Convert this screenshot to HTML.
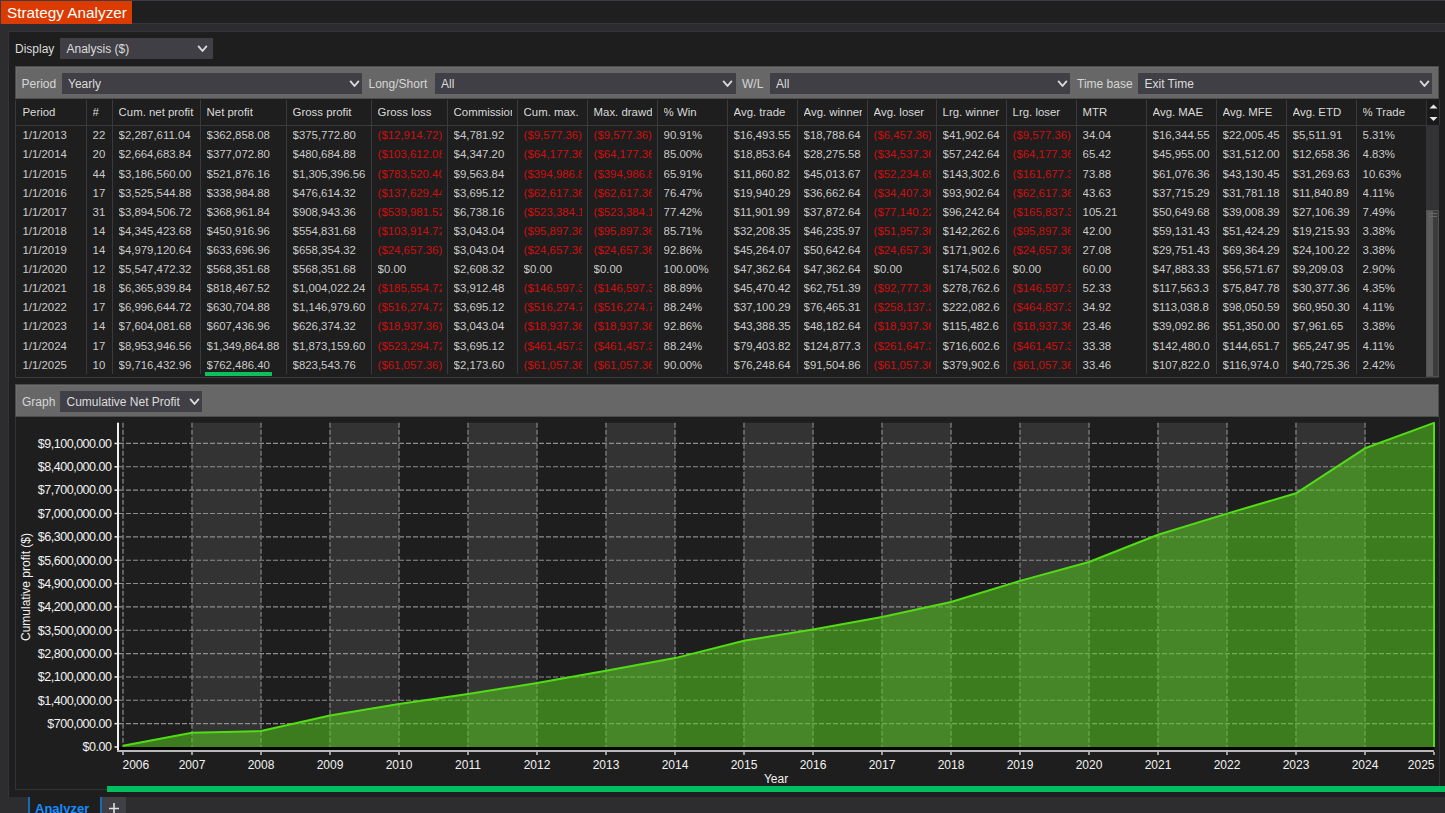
<!DOCTYPE html>
<html><head><meta charset="utf-8">
<style>
*{margin:0;padding:0;box-sizing:border-box}
html,body{width:1445px;height:813px;overflow:hidden;background:#2d2d30;font-family:"Liberation Sans", sans-serif;}
.a{position:absolute}
.t{position:absolute;white-space:nowrap;line-height:1;}
.cell{position:absolute;white-space:nowrap;overflow:hidden;line-height:1;font-size:11.4px;color:#cacaca}
.hd{color:#dadada}
.red{color:#cf0e0e}
.combo{position:absolute;background:#403f45}
.chev{position:absolute}
</style></head><body>

<div class="a" style="left:0;top:0;width:1445px;height:1px;background:#3c3c42"></div>
<div class="a" style="left:0;top:1px;width:1445px;height:22px;background:#1f1f1f"></div>
<div class="a" style="left:0;top:1px;width:1px;height:22px;background:#3c3c42"></div>
<div class="a" style="left:0;top:23px;width:1445px;height:9px;background:#2d2d30;border-top:1px solid #37373b"></div>
<div class="a" style="left:1px;top:1px;width:131px;height:23px;background:#db3a00"></div>
<div class="t" style="left:7px;top:5.38px;font-size:15.3px;color:#fff">Strategy Analyzer</div>
<div class="a" style="left:8px;top:31px;width:1437px;height:766px;background:#1e1e1e;border-top:1px solid #343438;border-left:1px solid #343438"></div>
<div class="t" style="left:15px;top:42.64px;font-size:12px;color:#dcdcdc">Display</div>
<div class="combo" style="left:60px;top:38px;width:153px;height:21px"></div>
<div class="t" style="left:66.5px;top:42.64px;font-size:12px;color:#dcdcdc">Analysis ($)</div>
<svg class="a" style="left:196.7px;top:44.5px" width="11" height="8" viewBox="0 0 11 8"><path d="M1.6 1.4 L5.5 6 L9.4 1.4" fill="none" stroke="#dadada" stroke-width="1.9" stroke-linecap="round" stroke-linejoin="round"/></svg>
<div class="a" style="left:15px;top:66px;width:1424px;height:33px;background:#676767;border:1px solid #4c4c4c;box-shadow:inset 1px 1px 0 #6e6e6e"></div>
<div class="t" style="left:21.5px;top:78.14px;font-size:12px;color:#d6d6d6">Period</div>
<div class="combo" style="left:62px;top:73px;width:300px;height:21px"></div>
<div class="t" style="left:68px;top:78.14px;font-size:12px;color:#dcdcdc">Yearly</div>
<svg class="a" style="left:348.5px;top:79.5px" width="11" height="8" viewBox="0 0 11 8"><path d="M1.6 1.4 L5.5 6 L9.4 1.4" fill="none" stroke="#dadada" stroke-width="1.9" stroke-linecap="round" stroke-linejoin="round"/></svg>
<div class="t" style="left:368.5px;top:78.14px;font-size:12px;color:#d6d6d6">Long/Short</div>
<div class="combo" style="left:435px;top:73px;width:300.5px;height:21px"></div>
<div class="t" style="left:441px;top:78.14px;font-size:12px;color:#dcdcdc">All</div>
<svg class="a" style="left:722.0px;top:79.5px" width="11" height="8" viewBox="0 0 11 8"><path d="M1.6 1.4 L5.5 6 L9.4 1.4" fill="none" stroke="#dadada" stroke-width="1.9" stroke-linecap="round" stroke-linejoin="round"/></svg>
<div class="t" style="left:742px;top:78.14px;font-size:12px;color:#d6d6d6">W/L</div>
<div class="combo" style="left:770px;top:73px;width:300px;height:21px"></div>
<div class="t" style="left:776px;top:78.14px;font-size:12px;color:#dcdcdc">All</div>
<svg class="a" style="left:1056.5px;top:79.5px" width="11" height="8" viewBox="0 0 11 8"><path d="M1.6 1.4 L5.5 6 L9.4 1.4" fill="none" stroke="#dadada" stroke-width="1.9" stroke-linecap="round" stroke-linejoin="round"/></svg>
<div class="t" style="left:1077px;top:78.14px;font-size:12px;color:#d6d6d6">Time base</div>
<div class="combo" style="left:1138px;top:73px;width:294px;height:21px"></div>
<div class="t" style="left:1144.5px;top:78.14px;font-size:12px;color:#dcdcdc">Exit Time</div>
<svg class="a" style="left:1418.5px;top:79.5px" width="11" height="8" viewBox="0 0 11 8"><path d="M1.6 1.4 L5.5 6 L9.4 1.4" fill="none" stroke="#dadada" stroke-width="1.9" stroke-linecap="round" stroke-linejoin="round"/></svg>
<div class="a" style="left:15px;top:99.5px;width:1411px;height:278px;background:#1e1e1e"></div>
<div class="a" style="left:15px;top:125px;width:1411px;height:1px;background:#3a3a3e"></div>
<div class="a" style="left:15px;top:377px;width:1424px;height:1px;background:#3a3a3e"></div>
<div class="a" style="left:86px;top:100px;width:1px;height:274px;background:#3a3a3e"></div>
<div class="a" style="left:112px;top:100px;width:1px;height:274px;background:#3a3a3e"></div>
<div class="a" style="left:200px;top:100px;width:1px;height:274px;background:#3a3a3e"></div>
<div class="a" style="left:286px;top:100px;width:1px;height:274px;background:#3a3a3e"></div>
<div class="a" style="left:371px;top:100px;width:1px;height:274px;background:#3a3a3e"></div>
<div class="a" style="left:447px;top:100px;width:1px;height:274px;background:#3a3a3e"></div>
<div class="a" style="left:517px;top:100px;width:1px;height:274px;background:#3a3a3e"></div>
<div class="a" style="left:587px;top:100px;width:1px;height:274px;background:#3a3a3e"></div>
<div class="a" style="left:657px;top:100px;width:1px;height:274px;background:#3a3a3e"></div>
<div class="a" style="left:727px;top:100px;width:1px;height:274px;background:#3a3a3e"></div>
<div class="a" style="left:797px;top:100px;width:1px;height:274px;background:#3a3a3e"></div>
<div class="a" style="left:867px;top:100px;width:1px;height:274px;background:#3a3a3e"></div>
<div class="a" style="left:936px;top:100px;width:1px;height:274px;background:#3a3a3e"></div>
<div class="a" style="left:1006px;top:100px;width:1px;height:274px;background:#3a3a3e"></div>
<div class="a" style="left:1076px;top:100px;width:1px;height:274px;background:#3a3a3e"></div>
<div class="a" style="left:1146px;top:100px;width:1px;height:274px;background:#3a3a3e"></div>
<div class="a" style="left:1216px;top:100px;width:1px;height:274px;background:#3a3a3e"></div>
<div class="a" style="left:1286px;top:100px;width:1px;height:274px;background:#3a3a3e"></div>
<div class="a" style="left:1356px;top:100px;width:1px;height:274px;background:#3a3a3e"></div>
<div class="a" style="left:15px;top:100px;width:1px;height:277px;background:#3a3a3e"></div>
<div class="cell hd" style="left:22.5px;top:106.85px;width:58.5px;height:14px">Period</div>
<div class="cell" style="left:22.5px;top:130.35px;width:58.5px;height:14px">1/1/2013</div>
<div class="cell" style="left:22.5px;top:149.46px;width:58.5px;height:14px">1/1/2014</div>
<div class="cell" style="left:22.5px;top:168.57px;width:58.5px;height:14px">1/1/2015</div>
<div class="cell" style="left:22.5px;top:187.68px;width:58.5px;height:14px">1/1/2016</div>
<div class="cell" style="left:22.5px;top:206.79px;width:58.5px;height:14px">1/1/2017</div>
<div class="cell" style="left:22.5px;top:225.90px;width:58.5px;height:14px">1/1/2018</div>
<div class="cell" style="left:22.5px;top:245.01px;width:58.5px;height:14px">1/1/2019</div>
<div class="cell" style="left:22.5px;top:264.12px;width:58.5px;height:14px">1/1/2020</div>
<div class="cell" style="left:22.5px;top:283.23px;width:58.5px;height:14px">1/1/2021</div>
<div class="cell" style="left:22.5px;top:302.34px;width:58.5px;height:14px">1/1/2022</div>
<div class="cell" style="left:22.5px;top:321.45px;width:58.5px;height:14px">1/1/2023</div>
<div class="cell" style="left:22.5px;top:340.56px;width:58.5px;height:14px">1/1/2024</div>
<div class="cell" style="left:22.5px;top:359.67px;width:58.5px;height:14px">1/1/2025</div>
<div class="cell hd" style="left:92.6px;top:106.85px;width:14.4px;height:14px">#</div>
<div class="cell" style="left:92.6px;top:130.35px;width:14.4px;height:14px">22</div>
<div class="cell" style="left:92.6px;top:149.46px;width:14.4px;height:14px">20</div>
<div class="cell" style="left:92.6px;top:168.57px;width:14.4px;height:14px">44</div>
<div class="cell" style="left:92.6px;top:187.68px;width:14.4px;height:14px">17</div>
<div class="cell" style="left:92.6px;top:206.79px;width:14.4px;height:14px">31</div>
<div class="cell" style="left:92.6px;top:225.90px;width:14.4px;height:14px">14</div>
<div class="cell" style="left:92.6px;top:245.01px;width:14.4px;height:14px">14</div>
<div class="cell" style="left:92.6px;top:264.12px;width:14.4px;height:14px">12</div>
<div class="cell" style="left:92.6px;top:283.23px;width:14.4px;height:14px">18</div>
<div class="cell" style="left:92.6px;top:302.34px;width:14.4px;height:14px">17</div>
<div class="cell" style="left:92.6px;top:321.45px;width:14.4px;height:14px">14</div>
<div class="cell" style="left:92.6px;top:340.56px;width:14.4px;height:14px">17</div>
<div class="cell" style="left:92.6px;top:359.67px;width:14.4px;height:14px">10</div>
<div class="cell hd" style="left:118.6px;top:106.85px;width:76.4px;height:14px">Cum. net profit</div>
<div class="cell" style="left:118.6px;top:130.35px;width:76.4px;height:14px">$2,287,611.04</div>
<div class="cell" style="left:118.6px;top:149.46px;width:76.4px;height:14px">$2,664,683.84</div>
<div class="cell" style="left:118.6px;top:168.57px;width:76.4px;height:14px">$3,186,560.00</div>
<div class="cell" style="left:118.6px;top:187.68px;width:76.4px;height:14px">$3,525,544.88</div>
<div class="cell" style="left:118.6px;top:206.79px;width:76.4px;height:14px">$3,894,506.72</div>
<div class="cell" style="left:118.6px;top:225.90px;width:76.4px;height:14px">$4,345,423.68</div>
<div class="cell" style="left:118.6px;top:245.01px;width:76.4px;height:14px">$4,979,120.64</div>
<div class="cell" style="left:118.6px;top:264.12px;width:76.4px;height:14px">$5,547,472.32</div>
<div class="cell" style="left:118.6px;top:283.23px;width:76.4px;height:14px">$6,365,939.84</div>
<div class="cell" style="left:118.6px;top:302.34px;width:76.4px;height:14px">$6,996,644.72</div>
<div class="cell" style="left:118.6px;top:321.45px;width:76.4px;height:14px">$7,604,081.68</div>
<div class="cell" style="left:118.6px;top:340.56px;width:76.4px;height:14px">$8,953,946.56</div>
<div class="cell" style="left:118.6px;top:359.67px;width:76.4px;height:14px">$9,716,432.96</div>
<div class="cell hd" style="left:206.6px;top:106.85px;width:74.4px;height:14px">Net profit</div>
<div class="cell" style="left:206.6px;top:130.35px;width:74.4px;height:14px">$362,858.08</div>
<div class="cell" style="left:206.6px;top:149.46px;width:74.4px;height:14px">$377,072.80</div>
<div class="cell" style="left:206.6px;top:168.57px;width:74.4px;height:14px">$521,876.16</div>
<div class="cell" style="left:206.6px;top:187.68px;width:74.4px;height:14px">$338,984.88</div>
<div class="cell" style="left:206.6px;top:206.79px;width:74.4px;height:14px">$368,961.84</div>
<div class="cell" style="left:206.6px;top:225.90px;width:74.4px;height:14px">$450,916.96</div>
<div class="cell" style="left:206.6px;top:245.01px;width:74.4px;height:14px">$633,696.96</div>
<div class="cell" style="left:206.6px;top:264.12px;width:74.4px;height:14px">$568,351.68</div>
<div class="cell" style="left:206.6px;top:283.23px;width:74.4px;height:14px">$818,467.52</div>
<div class="cell" style="left:206.6px;top:302.34px;width:74.4px;height:14px">$630,704.88</div>
<div class="cell" style="left:206.6px;top:321.45px;width:74.4px;height:14px">$607,436.96</div>
<div class="cell" style="left:206.6px;top:340.56px;width:74.4px;height:14px">$1,349,864.88</div>
<div class="cell" style="left:206.6px;top:359.67px;width:74.4px;height:14px">$762,486.40</div>
<div class="cell hd" style="left:292.6px;top:106.85px;width:73.4px;height:14px">Gross profit</div>
<div class="cell" style="left:292.6px;top:130.35px;width:73.4px;height:14px">$375,772.80</div>
<div class="cell" style="left:292.6px;top:149.46px;width:73.4px;height:14px">$480,684.88</div>
<div class="cell" style="left:292.6px;top:168.57px;width:73.4px;height:14px">$1,305,396.56</div>
<div class="cell" style="left:292.6px;top:187.68px;width:73.4px;height:14px">$476,614.32</div>
<div class="cell" style="left:292.6px;top:206.79px;width:73.4px;height:14px">$908,943.36</div>
<div class="cell" style="left:292.6px;top:225.90px;width:73.4px;height:14px">$554,831.68</div>
<div class="cell" style="left:292.6px;top:245.01px;width:73.4px;height:14px">$658,354.32</div>
<div class="cell" style="left:292.6px;top:264.12px;width:73.4px;height:14px">$568,351.68</div>
<div class="cell" style="left:292.6px;top:283.23px;width:73.4px;height:14px">$1,004,022.24</div>
<div class="cell" style="left:292.6px;top:302.34px;width:73.4px;height:14px">$1,146,979.60</div>
<div class="cell" style="left:292.6px;top:321.45px;width:73.4px;height:14px">$626,374.32</div>
<div class="cell" style="left:292.6px;top:340.56px;width:73.4px;height:14px">$1,873,159.60</div>
<div class="cell" style="left:292.6px;top:359.67px;width:73.4px;height:14px">$823,543.76</div>
<div class="cell hd" style="left:377.6px;top:106.85px;width:64.4px;height:14px">Gross loss</div>
<div class="cell red" style="left:377.6px;top:130.35px;width:64.4px;height:14px">($12,914.72)</div>
<div class="cell red" style="left:377.6px;top:149.46px;width:64.4px;height:14px">($103,612.08)</div>
<div class="cell red" style="left:377.6px;top:168.57px;width:64.4px;height:14px">($783,520.40)</div>
<div class="cell red" style="left:377.6px;top:187.68px;width:64.4px;height:14px">($137,629.44)</div>
<div class="cell red" style="left:377.6px;top:206.79px;width:64.4px;height:14px">($539,981.52)</div>
<div class="cell red" style="left:377.6px;top:225.90px;width:64.4px;height:14px">($103,914.72)</div>
<div class="cell red" style="left:377.6px;top:245.01px;width:64.4px;height:14px">($24,657.36)</div>
<div class="cell" style="left:377.6px;top:264.12px;width:64.4px;height:14px">$0.00</div>
<div class="cell red" style="left:377.6px;top:283.23px;width:64.4px;height:14px">($185,554.72)</div>
<div class="cell red" style="left:377.6px;top:302.34px;width:64.4px;height:14px">($516,274.72)</div>
<div class="cell red" style="left:377.6px;top:321.45px;width:64.4px;height:14px">($18,937.36)</div>
<div class="cell red" style="left:377.6px;top:340.56px;width:64.4px;height:14px">($523,294.72)</div>
<div class="cell red" style="left:377.6px;top:359.67px;width:64.4px;height:14px">($61,057.36)</div>
<div class="cell hd" style="left:453.6px;top:106.85px;width:58.4px;height:14px">Commission</div>
<div class="cell" style="left:453.6px;top:130.35px;width:58.4px;height:14px">$4,781.92</div>
<div class="cell" style="left:453.6px;top:149.46px;width:58.4px;height:14px">$4,347.20</div>
<div class="cell" style="left:453.6px;top:168.57px;width:58.4px;height:14px">$9,563.84</div>
<div class="cell" style="left:453.6px;top:187.68px;width:58.4px;height:14px">$3,695.12</div>
<div class="cell" style="left:453.6px;top:206.79px;width:58.4px;height:14px">$6,738.16</div>
<div class="cell" style="left:453.6px;top:225.90px;width:58.4px;height:14px">$3,043.04</div>
<div class="cell" style="left:453.6px;top:245.01px;width:58.4px;height:14px">$3,043.04</div>
<div class="cell" style="left:453.6px;top:264.12px;width:58.4px;height:14px">$2,608.32</div>
<div class="cell" style="left:453.6px;top:283.23px;width:58.4px;height:14px">$3,912.48</div>
<div class="cell" style="left:453.6px;top:302.34px;width:58.4px;height:14px">$3,695.12</div>
<div class="cell" style="left:453.6px;top:321.45px;width:58.4px;height:14px">$3,043.04</div>
<div class="cell" style="left:453.6px;top:340.56px;width:58.4px;height:14px">$3,695.12</div>
<div class="cell" style="left:453.6px;top:359.67px;width:58.4px;height:14px">$2,173.60</div>
<div class="cell hd" style="left:523.6px;top:106.85px;width:58.4px;height:14px">Cum. max. drawdown</div>
<div class="cell red" style="left:523.6px;top:130.35px;width:58.4px;height:14px">($9,577.36)</div>
<div class="cell red" style="left:523.6px;top:149.46px;width:58.4px;height:14px">($64,177.36)</div>
<div class="cell red" style="left:523.6px;top:168.57px;width:58.4px;height:14px">($394,986.88)</div>
<div class="cell red" style="left:523.6px;top:187.68px;width:58.4px;height:14px">($62,617.36)</div>
<div class="cell red" style="left:523.6px;top:206.79px;width:58.4px;height:14px">($523,384.16)</div>
<div class="cell red" style="left:523.6px;top:225.90px;width:58.4px;height:14px">($95,897.36)</div>
<div class="cell red" style="left:523.6px;top:245.01px;width:58.4px;height:14px">($24,657.36)</div>
<div class="cell" style="left:523.6px;top:264.12px;width:58.4px;height:14px">$0.00</div>
<div class="cell red" style="left:523.6px;top:283.23px;width:58.4px;height:14px">($146,597.36)</div>
<div class="cell red" style="left:523.6px;top:302.34px;width:58.4px;height:14px">($516,274.72)</div>
<div class="cell red" style="left:523.6px;top:321.45px;width:58.4px;height:14px">($18,937.36)</div>
<div class="cell red" style="left:523.6px;top:340.56px;width:58.4px;height:14px">($461,457.36)</div>
<div class="cell red" style="left:523.6px;top:359.67px;width:58.4px;height:14px">($61,057.36)</div>
<div class="cell hd" style="left:593.6px;top:106.85px;width:58.4px;height:14px">Max. drawdown</div>
<div class="cell red" style="left:593.6px;top:130.35px;width:58.4px;height:14px">($9,577.36)</div>
<div class="cell red" style="left:593.6px;top:149.46px;width:58.4px;height:14px">($64,177.36)</div>
<div class="cell red" style="left:593.6px;top:168.57px;width:58.4px;height:14px">($394,986.88)</div>
<div class="cell red" style="left:593.6px;top:187.68px;width:58.4px;height:14px">($62,617.36)</div>
<div class="cell red" style="left:593.6px;top:206.79px;width:58.4px;height:14px">($523,384.16)</div>
<div class="cell red" style="left:593.6px;top:225.90px;width:58.4px;height:14px">($95,897.36)</div>
<div class="cell red" style="left:593.6px;top:245.01px;width:58.4px;height:14px">($24,657.36)</div>
<div class="cell" style="left:593.6px;top:264.12px;width:58.4px;height:14px">$0.00</div>
<div class="cell red" style="left:593.6px;top:283.23px;width:58.4px;height:14px">($146,597.36)</div>
<div class="cell red" style="left:593.6px;top:302.34px;width:58.4px;height:14px">($516,274.72)</div>
<div class="cell red" style="left:593.6px;top:321.45px;width:58.4px;height:14px">($18,937.36)</div>
<div class="cell red" style="left:593.6px;top:340.56px;width:58.4px;height:14px">($461,457.36)</div>
<div class="cell red" style="left:593.6px;top:359.67px;width:58.4px;height:14px">($61,057.36)</div>
<div class="cell hd" style="left:663.6px;top:106.85px;width:58.4px;height:14px">% Win</div>
<div class="cell" style="left:663.6px;top:130.35px;width:58.4px;height:14px">90.91%</div>
<div class="cell" style="left:663.6px;top:149.46px;width:58.4px;height:14px">85.00%</div>
<div class="cell" style="left:663.6px;top:168.57px;width:58.4px;height:14px">65.91%</div>
<div class="cell" style="left:663.6px;top:187.68px;width:58.4px;height:14px">76.47%</div>
<div class="cell" style="left:663.6px;top:206.79px;width:58.4px;height:14px">77.42%</div>
<div class="cell" style="left:663.6px;top:225.90px;width:58.4px;height:14px">85.71%</div>
<div class="cell" style="left:663.6px;top:245.01px;width:58.4px;height:14px">92.86%</div>
<div class="cell" style="left:663.6px;top:264.12px;width:58.4px;height:14px">100.00%</div>
<div class="cell" style="left:663.6px;top:283.23px;width:58.4px;height:14px">88.89%</div>
<div class="cell" style="left:663.6px;top:302.34px;width:58.4px;height:14px">88.24%</div>
<div class="cell" style="left:663.6px;top:321.45px;width:58.4px;height:14px">92.86%</div>
<div class="cell" style="left:663.6px;top:340.56px;width:58.4px;height:14px">88.24%</div>
<div class="cell" style="left:663.6px;top:359.67px;width:58.4px;height:14px">90.00%</div>
<div class="cell hd" style="left:733.6px;top:106.85px;width:58.4px;height:14px">Avg. trade</div>
<div class="cell" style="left:733.6px;top:130.35px;width:58.4px;height:14px">$16,493.55</div>
<div class="cell" style="left:733.6px;top:149.46px;width:58.4px;height:14px">$18,853.64</div>
<div class="cell" style="left:733.6px;top:168.57px;width:58.4px;height:14px">$11,860.82</div>
<div class="cell" style="left:733.6px;top:187.68px;width:58.4px;height:14px">$19,940.29</div>
<div class="cell" style="left:733.6px;top:206.79px;width:58.4px;height:14px">$11,901.99</div>
<div class="cell" style="left:733.6px;top:225.90px;width:58.4px;height:14px">$32,208.35</div>
<div class="cell" style="left:733.6px;top:245.01px;width:58.4px;height:14px">$45,264.07</div>
<div class="cell" style="left:733.6px;top:264.12px;width:58.4px;height:14px">$47,362.64</div>
<div class="cell" style="left:733.6px;top:283.23px;width:58.4px;height:14px">$45,470.42</div>
<div class="cell" style="left:733.6px;top:302.34px;width:58.4px;height:14px">$37,100.29</div>
<div class="cell" style="left:733.6px;top:321.45px;width:58.4px;height:14px">$43,388.35</div>
<div class="cell" style="left:733.6px;top:340.56px;width:58.4px;height:14px">$79,403.82</div>
<div class="cell" style="left:733.6px;top:359.67px;width:58.4px;height:14px">$76,248.64</div>
<div class="cell hd" style="left:803.6px;top:106.85px;width:58.4px;height:14px">Avg. winner</div>
<div class="cell" style="left:803.6px;top:130.35px;width:58.4px;height:14px">$18,788.64</div>
<div class="cell" style="left:803.6px;top:149.46px;width:58.4px;height:14px">$28,275.58</div>
<div class="cell" style="left:803.6px;top:168.57px;width:58.4px;height:14px">$45,013.67</div>
<div class="cell" style="left:803.6px;top:187.68px;width:58.4px;height:14px">$36,662.64</div>
<div class="cell" style="left:803.6px;top:206.79px;width:58.4px;height:14px">$37,872.64</div>
<div class="cell" style="left:803.6px;top:225.90px;width:58.4px;height:14px">$46,235.97</div>
<div class="cell" style="left:803.6px;top:245.01px;width:58.4px;height:14px">$50,642.64</div>
<div class="cell" style="left:803.6px;top:264.12px;width:58.4px;height:14px">$47,362.64</div>
<div class="cell" style="left:803.6px;top:283.23px;width:58.4px;height:14px">$62,751.39</div>
<div class="cell" style="left:803.6px;top:302.34px;width:58.4px;height:14px">$76,465.31</div>
<div class="cell" style="left:803.6px;top:321.45px;width:58.4px;height:14px">$48,182.64</div>
<div class="cell" style="left:803.6px;top:340.56px;width:58.4px;height:14px">$124,877.3</div>
<div class="cell" style="left:803.6px;top:359.67px;width:58.4px;height:14px">$91,504.86</div>
<div class="cell hd" style="left:873.6px;top:106.85px;width:57.4px;height:14px">Avg. loser</div>
<div class="cell red" style="left:873.6px;top:130.35px;width:57.4px;height:14px">($6,457.36)</div>
<div class="cell red" style="left:873.6px;top:149.46px;width:57.4px;height:14px">($34,537.36)</div>
<div class="cell red" style="left:873.6px;top:168.57px;width:57.4px;height:14px">($52,234.69)</div>
<div class="cell red" style="left:873.6px;top:187.68px;width:57.4px;height:14px">($34,407.36)</div>
<div class="cell red" style="left:873.6px;top:206.79px;width:57.4px;height:14px">($77,140.22)</div>
<div class="cell red" style="left:873.6px;top:225.90px;width:57.4px;height:14px">($51,957.36)</div>
<div class="cell red" style="left:873.6px;top:245.01px;width:57.4px;height:14px">($24,657.36)</div>
<div class="cell" style="left:873.6px;top:264.12px;width:57.4px;height:14px">$0.00</div>
<div class="cell red" style="left:873.6px;top:283.23px;width:57.4px;height:14px">($92,777.36)</div>
<div class="cell red" style="left:873.6px;top:302.34px;width:57.4px;height:14px">($258,137.36)</div>
<div class="cell red" style="left:873.6px;top:321.45px;width:57.4px;height:14px">($18,937.36)</div>
<div class="cell red" style="left:873.6px;top:340.56px;width:57.4px;height:14px">($261,647.36)</div>
<div class="cell red" style="left:873.6px;top:359.67px;width:57.4px;height:14px">($61,057.36)</div>
<div class="cell hd" style="left:942.6px;top:106.85px;width:58.4px;height:14px">Lrg. winner</div>
<div class="cell" style="left:942.6px;top:130.35px;width:58.4px;height:14px">$41,902.64</div>
<div class="cell" style="left:942.6px;top:149.46px;width:58.4px;height:14px">$57,242.64</div>
<div class="cell" style="left:942.6px;top:168.57px;width:58.4px;height:14px">$143,302.6</div>
<div class="cell" style="left:942.6px;top:187.68px;width:58.4px;height:14px">$93,902.64</div>
<div class="cell" style="left:942.6px;top:206.79px;width:58.4px;height:14px">$96,242.64</div>
<div class="cell" style="left:942.6px;top:225.90px;width:58.4px;height:14px">$142,262.6</div>
<div class="cell" style="left:942.6px;top:245.01px;width:58.4px;height:14px">$171,902.6</div>
<div class="cell" style="left:942.6px;top:264.12px;width:58.4px;height:14px">$174,502.6</div>
<div class="cell" style="left:942.6px;top:283.23px;width:58.4px;height:14px">$278,762.6</div>
<div class="cell" style="left:942.6px;top:302.34px;width:58.4px;height:14px">$222,082.6</div>
<div class="cell" style="left:942.6px;top:321.45px;width:58.4px;height:14px">$115,482.6</div>
<div class="cell" style="left:942.6px;top:340.56px;width:58.4px;height:14px">$716,602.6</div>
<div class="cell" style="left:942.6px;top:359.67px;width:58.4px;height:14px">$379,902.6</div>
<div class="cell hd" style="left:1012.6px;top:106.85px;width:58.4px;height:14px">Lrg. loser</div>
<div class="cell red" style="left:1012.6px;top:130.35px;width:58.4px;height:14px">($9,577.36)</div>
<div class="cell red" style="left:1012.6px;top:149.46px;width:58.4px;height:14px">($64,177.36)</div>
<div class="cell red" style="left:1012.6px;top:168.57px;width:58.4px;height:14px">($161,677.36)</div>
<div class="cell red" style="left:1012.6px;top:187.68px;width:58.4px;height:14px">($62,617.36)</div>
<div class="cell red" style="left:1012.6px;top:206.79px;width:58.4px;height:14px">($165,837.36)</div>
<div class="cell red" style="left:1012.6px;top:225.90px;width:58.4px;height:14px">($95,897.36)</div>
<div class="cell red" style="left:1012.6px;top:245.01px;width:58.4px;height:14px">($24,657.36)</div>
<div class="cell" style="left:1012.6px;top:264.12px;width:58.4px;height:14px">$0.00</div>
<div class="cell red" style="left:1012.6px;top:283.23px;width:58.4px;height:14px">($146,597.36)</div>
<div class="cell red" style="left:1012.6px;top:302.34px;width:58.4px;height:14px">($464,837.36)</div>
<div class="cell red" style="left:1012.6px;top:321.45px;width:58.4px;height:14px">($18,937.36)</div>
<div class="cell red" style="left:1012.6px;top:340.56px;width:58.4px;height:14px">($461,457.36)</div>
<div class="cell red" style="left:1012.6px;top:359.67px;width:58.4px;height:14px">($61,057.36)</div>
<div class="cell hd" style="left:1082.6px;top:106.85px;width:58.4px;height:14px">MTR</div>
<div class="cell" style="left:1082.6px;top:130.35px;width:58.4px;height:14px">34.04</div>
<div class="cell" style="left:1082.6px;top:149.46px;width:58.4px;height:14px">65.42</div>
<div class="cell" style="left:1082.6px;top:168.57px;width:58.4px;height:14px">73.88</div>
<div class="cell" style="left:1082.6px;top:187.68px;width:58.4px;height:14px">43.63</div>
<div class="cell" style="left:1082.6px;top:206.79px;width:58.4px;height:14px">105.21</div>
<div class="cell" style="left:1082.6px;top:225.90px;width:58.4px;height:14px">42.00</div>
<div class="cell" style="left:1082.6px;top:245.01px;width:58.4px;height:14px">27.08</div>
<div class="cell" style="left:1082.6px;top:264.12px;width:58.4px;height:14px">60.00</div>
<div class="cell" style="left:1082.6px;top:283.23px;width:58.4px;height:14px">52.33</div>
<div class="cell" style="left:1082.6px;top:302.34px;width:58.4px;height:14px">34.92</div>
<div class="cell" style="left:1082.6px;top:321.45px;width:58.4px;height:14px">23.46</div>
<div class="cell" style="left:1082.6px;top:340.56px;width:58.4px;height:14px">33.38</div>
<div class="cell" style="left:1082.6px;top:359.67px;width:58.4px;height:14px">33.46</div>
<div class="cell hd" style="left:1152.6px;top:106.85px;width:58.4px;height:14px">Avg. MAE</div>
<div class="cell" style="left:1152.6px;top:130.35px;width:58.4px;height:14px">$16,344.55</div>
<div class="cell" style="left:1152.6px;top:149.46px;width:58.4px;height:14px">$45,955.00</div>
<div class="cell" style="left:1152.6px;top:168.57px;width:58.4px;height:14px">$61,076.36</div>
<div class="cell" style="left:1152.6px;top:187.68px;width:58.4px;height:14px">$37,715.29</div>
<div class="cell" style="left:1152.6px;top:206.79px;width:58.4px;height:14px">$50,649.68</div>
<div class="cell" style="left:1152.6px;top:225.90px;width:58.4px;height:14px">$59,131.43</div>
<div class="cell" style="left:1152.6px;top:245.01px;width:58.4px;height:14px">$29,751.43</div>
<div class="cell" style="left:1152.6px;top:264.12px;width:58.4px;height:14px">$47,883.33</div>
<div class="cell" style="left:1152.6px;top:283.23px;width:58.4px;height:14px">$117,563.3</div>
<div class="cell" style="left:1152.6px;top:302.34px;width:58.4px;height:14px">$113,038.8</div>
<div class="cell" style="left:1152.6px;top:321.45px;width:58.4px;height:14px">$39,092.86</div>
<div class="cell" style="left:1152.6px;top:340.56px;width:58.4px;height:14px">$142,480.0</div>
<div class="cell" style="left:1152.6px;top:359.67px;width:58.4px;height:14px">$107,822.0</div>
<div class="cell hd" style="left:1222.6px;top:106.85px;width:58.4px;height:14px">Avg. MFE</div>
<div class="cell" style="left:1222.6px;top:130.35px;width:58.4px;height:14px">$22,005.45</div>
<div class="cell" style="left:1222.6px;top:149.46px;width:58.4px;height:14px">$31,512.00</div>
<div class="cell" style="left:1222.6px;top:168.57px;width:58.4px;height:14px">$43,130.45</div>
<div class="cell" style="left:1222.6px;top:187.68px;width:58.4px;height:14px">$31,781.18</div>
<div class="cell" style="left:1222.6px;top:206.79px;width:58.4px;height:14px">$39,008.39</div>
<div class="cell" style="left:1222.6px;top:225.90px;width:58.4px;height:14px">$51,424.29</div>
<div class="cell" style="left:1222.6px;top:245.01px;width:58.4px;height:14px">$69,364.29</div>
<div class="cell" style="left:1222.6px;top:264.12px;width:58.4px;height:14px">$56,571.67</div>
<div class="cell" style="left:1222.6px;top:283.23px;width:58.4px;height:14px">$75,847.78</div>
<div class="cell" style="left:1222.6px;top:302.34px;width:58.4px;height:14px">$98,050.59</div>
<div class="cell" style="left:1222.6px;top:321.45px;width:58.4px;height:14px">$51,350.00</div>
<div class="cell" style="left:1222.6px;top:340.56px;width:58.4px;height:14px">$144,651.7</div>
<div class="cell" style="left:1222.6px;top:359.67px;width:58.4px;height:14px">$116,974.0</div>
<div class="cell hd" style="left:1292.6px;top:106.85px;width:58.4px;height:14px">Avg. ETD</div>
<div class="cell" style="left:1292.6px;top:130.35px;width:58.4px;height:14px">$5,511.91</div>
<div class="cell" style="left:1292.6px;top:149.46px;width:58.4px;height:14px">$12,658.36</div>
<div class="cell" style="left:1292.6px;top:168.57px;width:58.4px;height:14px">$31,269.63</div>
<div class="cell" style="left:1292.6px;top:187.68px;width:58.4px;height:14px">$11,840.89</div>
<div class="cell" style="left:1292.6px;top:206.79px;width:58.4px;height:14px">$27,106.39</div>
<div class="cell" style="left:1292.6px;top:225.90px;width:58.4px;height:14px">$19,215.93</div>
<div class="cell" style="left:1292.6px;top:245.01px;width:58.4px;height:14px">$24,100.22</div>
<div class="cell" style="left:1292.6px;top:264.12px;width:58.4px;height:14px">$9,209.03</div>
<div class="cell" style="left:1292.6px;top:283.23px;width:58.4px;height:14px">$30,377.36</div>
<div class="cell" style="left:1292.6px;top:302.34px;width:58.4px;height:14px">$60,950.30</div>
<div class="cell" style="left:1292.6px;top:321.45px;width:58.4px;height:14px">$7,961.65</div>
<div class="cell" style="left:1292.6px;top:340.56px;width:58.4px;height:14px">$65,247.95</div>
<div class="cell" style="left:1292.6px;top:359.67px;width:58.4px;height:14px">$40,725.36</div>
<div class="cell hd" style="left:1362.6px;top:106.85px;width:58.4px;height:14px">% Trade</div>
<div class="cell" style="left:1362.6px;top:130.35px;width:58.4px;height:14px">5.31%</div>
<div class="cell" style="left:1362.6px;top:149.46px;width:58.4px;height:14px">4.83%</div>
<div class="cell" style="left:1362.6px;top:168.57px;width:58.4px;height:14px">10.63%</div>
<div class="cell" style="left:1362.6px;top:187.68px;width:58.4px;height:14px">4.11%</div>
<div class="cell" style="left:1362.6px;top:206.79px;width:58.4px;height:14px">7.49%</div>
<div class="cell" style="left:1362.6px;top:225.90px;width:58.4px;height:14px">3.38%</div>
<div class="cell" style="left:1362.6px;top:245.01px;width:58.4px;height:14px">3.38%</div>
<div class="cell" style="left:1362.6px;top:264.12px;width:58.4px;height:14px">2.90%</div>
<div class="cell" style="left:1362.6px;top:283.23px;width:58.4px;height:14px">4.35%</div>
<div class="cell" style="left:1362.6px;top:302.34px;width:58.4px;height:14px">4.11%</div>
<div class="cell" style="left:1362.6px;top:321.45px;width:58.4px;height:14px">3.38%</div>
<div class="cell" style="left:1362.6px;top:340.56px;width:58.4px;height:14px">4.11%</div>
<div class="cell" style="left:1362.6px;top:359.67px;width:58.4px;height:14px">2.42%</div>
<div class="a" style="left:205px;top:372px;width:67px;height:4px;background:#0fbf5c"></div>
<div class="a" style="left:1426px;top:100px;width:14px;height:25px;background:#1a1a1a;border-left:1px solid #333336;border-right:1px solid #333336"></div>
<svg class="a" style="left:1426.5px;top:100px" width="13" height="25" viewBox="0 0 13 25"><path d="M2.5 8.5 L6.5 4.5 L10.5 8.5 Z" fill="#e8e8e8"/><path d="M2.5 17 L6.5 21 L10.5 17 Z" fill="#e8e8e8"/></svg>
<div class="a" style="left:1426px;top:125px;width:13px;height:252px;background:#333335"></div>
<div class="a" style="left:1426px;top:210px;width:13px;height:167px;background:#3c3c3c;border:1px solid #505050"></div>
<div class="a" style="left:1427px;top:211px;width:6px;height:165px;background:#5c5c5c"></div>
<div class="a" style="left:1429px;top:213px;width:8px;height:1px;background:#6a6a6a"></div>
<div class="a" style="left:1429px;top:216px;width:8px;height:1px;background:#6a6a6a"></div>
<div class="a" style="left:15px;top:384px;width:1424px;height:33px;background:#676767;border:1px solid #4c4c4c;box-shadow:inset 1px 1px 0 #6e6e6e"></div>
<div class="t" style="left:22px;top:396.04px;font-size:12px;color:#d6d6d6">Graph</div>
<div class="combo" style="left:60px;top:391px;width:141.5px;height:21px"></div>
<div class="t" style="left:66.5px;top:396.04px;font-size:12px;color:#dcdcdc">Cumulative Net Profit</div>
<svg class="a" style="left:188.5px;top:397.5px" width="11" height="8" viewBox="0 0 11 8"><path d="M1.6 1.4 L5.5 6 L9.4 1.4" fill="none" stroke="#dadada" stroke-width="1.9" stroke-linecap="round" stroke-linejoin="round"/></svg>
<div class="a" style="left:15px;top:417px;width:1425px;height:373px;border:1px solid #333336;border-top:none"></div>
<div class="a" style="left:107px;top:786px;width:1338px;height:5.5px;background:#00bf60"></div>
<div class="a" style="left:0;top:797px;width:1445px;height:16px;background:#2d2d30"></div>
<div class="a" style="left:28px;top:797px;width:74px;height:16px;background:#1e1e1e;border-left:2px solid #1a6ab8;border-right:2px solid #1a6ab8"></div>
<div class="t" style="left:35px;top:802.00px;font-size:13px;font-weight:bold;color:#168cff">Analyzer</div>
<div class="a" style="left:102px;top:797px;width:24px;height:16px;background:#3f3f46"></div>
<svg class="a" style="left:102px;top:797px" width="24" height="16" viewBox="0 0 24 16"><path d="M12 6 V16 M7 11.5 H17" stroke="#e0e0e0" stroke-width="1.6"/></svg>
<svg class="a" style="left:0;top:0" width="1445" height="813" viewBox="0 0 1445 813">
<rect x="192" y="422.7" width="69" height="324.3" fill="#333333"/>
<rect x="330" y="422.7" width="69" height="324.3" fill="#333333"/>
<rect x="468" y="422.7" width="69" height="324.3" fill="#333333"/>
<rect x="606" y="422.7" width="69" height="324.3" fill="#333333"/>
<rect x="744" y="422.7" width="69" height="324.3" fill="#333333"/>
<rect x="882" y="422.7" width="69" height="324.3" fill="#333333"/>
<rect x="1020" y="422.7" width="69" height="324.3" fill="#333333"/>
<rect x="1158" y="422.7" width="69" height="324.3" fill="#333333"/>
<rect x="1296" y="422.7" width="69" height="324.3" fill="#333333"/>
<line x1="119" y1="723.6" x2="1434" y2="723.6" stroke="#8e8e8e" stroke-width="1.1" stroke-dasharray="5,2"/>
<line x1="119" y1="700.3" x2="1434" y2="700.3" stroke="#8e8e8e" stroke-width="1.1" stroke-dasharray="5,2"/>
<line x1="119" y1="677.0" x2="1434" y2="677.0" stroke="#8e8e8e" stroke-width="1.1" stroke-dasharray="5,2"/>
<line x1="119" y1="653.6" x2="1434" y2="653.6" stroke="#8e8e8e" stroke-width="1.1" stroke-dasharray="5,2"/>
<line x1="119" y1="630.2" x2="1434" y2="630.2" stroke="#8e8e8e" stroke-width="1.1" stroke-dasharray="5,2"/>
<line x1="119" y1="606.9" x2="1434" y2="606.9" stroke="#8e8e8e" stroke-width="1.1" stroke-dasharray="5,2"/>
<line x1="119" y1="583.5" x2="1434" y2="583.5" stroke="#8e8e8e" stroke-width="1.1" stroke-dasharray="5,2"/>
<line x1="119" y1="560.2" x2="1434" y2="560.2" stroke="#8e8e8e" stroke-width="1.1" stroke-dasharray="5,2"/>
<line x1="119" y1="536.9" x2="1434" y2="536.9" stroke="#8e8e8e" stroke-width="1.1" stroke-dasharray="5,2"/>
<line x1="119" y1="513.5" x2="1434" y2="513.5" stroke="#8e8e8e" stroke-width="1.1" stroke-dasharray="5,2"/>
<line x1="119" y1="490.1" x2="1434" y2="490.1" stroke="#8e8e8e" stroke-width="1.1" stroke-dasharray="5,2"/>
<line x1="119" y1="466.8" x2="1434" y2="466.8" stroke="#8e8e8e" stroke-width="1.1" stroke-dasharray="5,2"/>
<line x1="119" y1="443.4" x2="1434" y2="443.4" stroke="#8e8e8e" stroke-width="1.1" stroke-dasharray="5,2"/>
<line x1="123" y1="422.7" x2="123" y2="747.0" stroke="#6c6c6c" stroke-width="1.7" stroke-dasharray="5,2"/>
<line x1="192" y1="422.7" x2="192" y2="747.0" stroke="#6c6c6c" stroke-width="1.7" stroke-dasharray="5,2"/>
<line x1="261" y1="422.7" x2="261" y2="747.0" stroke="#6c6c6c" stroke-width="1.7" stroke-dasharray="5,2"/>
<line x1="330" y1="422.7" x2="330" y2="747.0" stroke="#6c6c6c" stroke-width="1.7" stroke-dasharray="5,2"/>
<line x1="399" y1="422.7" x2="399" y2="747.0" stroke="#6c6c6c" stroke-width="1.7" stroke-dasharray="5,2"/>
<line x1="468" y1="422.7" x2="468" y2="747.0" stroke="#6c6c6c" stroke-width="1.7" stroke-dasharray="5,2"/>
<line x1="537" y1="422.7" x2="537" y2="747.0" stroke="#6c6c6c" stroke-width="1.7" stroke-dasharray="5,2"/>
<line x1="606" y1="422.7" x2="606" y2="747.0" stroke="#6c6c6c" stroke-width="1.7" stroke-dasharray="5,2"/>
<line x1="675" y1="422.7" x2="675" y2="747.0" stroke="#6c6c6c" stroke-width="1.7" stroke-dasharray="5,2"/>
<line x1="744" y1="422.7" x2="744" y2="747.0" stroke="#6c6c6c" stroke-width="1.7" stroke-dasharray="5,2"/>
<line x1="813" y1="422.7" x2="813" y2="747.0" stroke="#6c6c6c" stroke-width="1.7" stroke-dasharray="5,2"/>
<line x1="882" y1="422.7" x2="882" y2="747.0" stroke="#6c6c6c" stroke-width="1.7" stroke-dasharray="5,2"/>
<line x1="951" y1="422.7" x2="951" y2="747.0" stroke="#6c6c6c" stroke-width="1.7" stroke-dasharray="5,2"/>
<line x1="1020" y1="422.7" x2="1020" y2="747.0" stroke="#6c6c6c" stroke-width="1.7" stroke-dasharray="5,2"/>
<line x1="1089" y1="422.7" x2="1089" y2="747.0" stroke="#6c6c6c" stroke-width="1.7" stroke-dasharray="5,2"/>
<line x1="1158" y1="422.7" x2="1158" y2="747.0" stroke="#6c6c6c" stroke-width="1.7" stroke-dasharray="5,2"/>
<line x1="1227" y1="422.7" x2="1227" y2="747.0" stroke="#6c6c6c" stroke-width="1.7" stroke-dasharray="5,2"/>
<line x1="1296" y1="422.7" x2="1296" y2="747.0" stroke="#6c6c6c" stroke-width="1.7" stroke-dasharray="5,2"/>
<line x1="1365" y1="422.7" x2="1365" y2="747.0" stroke="#6c6c6c" stroke-width="1.7" stroke-dasharray="5,2"/>
<polygon points="123,747.0 123.0,745.7 192.0,732.8 261.0,731.1 330.0,715.5 399.0,704.1 468.0,694.1 537.0,683.0 606.0,670.7 675.0,658.1 744.0,640.7 813.0,629.4 882.0,617.1 951.0,602.0 1020.0,580.9 1089.0,562.0 1158.0,534.7 1227.0,513.6 1296.0,493.3 1365.0,448.3 1434.0,422.9 1434,747.0" fill="rgb(86,202,31)" fill-opacity="0.55"/>
<polyline points="123.0,745.7 192.0,732.8 261.0,731.1 330.0,715.5 399.0,704.1 468.0,694.1 537.0,683.0 606.0,670.7 675.0,658.1 744.0,640.7 813.0,629.4 882.0,617.1 951.0,602.0 1020.0,580.9 1089.0,562.0 1158.0,534.7 1227.0,513.6 1296.0,493.3 1365.0,448.3 1434.0,422.9 1434,747.0" fill="none" stroke="#52dc16" stroke-width="2" stroke-linejoin="round"/>
<rect x="119" y="747.0" width="1315" height="3" fill="#050505"/>
<rect x="117" y="422.7" width="2" height="329.3" fill="#f0f0f0"/>
<rect x="117" y="750" width="1317" height="2" fill="#b9b9b9"/>
<rect x="114.5" y="746.25" width="3" height="1.5" fill="#e8e8e8"/>
<text x="111.5" y="751.3" text-anchor="end" font-family="Liberation Sans, sans-serif" font-size="12.5" letter-spacing="-0.48" fill="#f2f2f2">$0.00</text>
<rect x="114.5" y="722.90" width="3" height="1.5" fill="#e8e8e8"/>
<text x="111.5" y="727.9" text-anchor="end" font-family="Liberation Sans, sans-serif" font-size="12.5" letter-spacing="-0.48" fill="#f2f2f2">$700,000.00</text>
<rect x="114.5" y="699.55" width="3" height="1.5" fill="#e8e8e8"/>
<text x="111.5" y="704.6" text-anchor="end" font-family="Liberation Sans, sans-serif" font-size="12.5" letter-spacing="-0.48" fill="#f2f2f2">$1,400,000.00</text>
<rect x="114.5" y="676.20" width="3" height="1.5" fill="#e8e8e8"/>
<text x="111.5" y="681.2" text-anchor="end" font-family="Liberation Sans, sans-serif" font-size="12.5" letter-spacing="-0.48" fill="#f2f2f2">$2,100,000.00</text>
<rect x="114.5" y="652.85" width="3" height="1.5" fill="#e8e8e8"/>
<text x="111.5" y="657.9" text-anchor="end" font-family="Liberation Sans, sans-serif" font-size="12.5" letter-spacing="-0.48" fill="#f2f2f2">$2,800,000.00</text>
<rect x="114.5" y="629.50" width="3" height="1.5" fill="#e8e8e8"/>
<text x="111.5" y="634.5" text-anchor="end" font-family="Liberation Sans, sans-serif" font-size="12.5" letter-spacing="-0.48" fill="#f2f2f2">$3,500,000.00</text>
<rect x="114.5" y="606.15" width="3" height="1.5" fill="#e8e8e8"/>
<text x="111.5" y="611.2" text-anchor="end" font-family="Liberation Sans, sans-serif" font-size="12.5" letter-spacing="-0.48" fill="#f2f2f2">$4,200,000.00</text>
<rect x="114.5" y="582.80" width="3" height="1.5" fill="#e8e8e8"/>
<text x="111.5" y="587.8" text-anchor="end" font-family="Liberation Sans, sans-serif" font-size="12.5" letter-spacing="-0.48" fill="#f2f2f2">$4,900,000.00</text>
<rect x="114.5" y="559.45" width="3" height="1.5" fill="#e8e8e8"/>
<text x="111.5" y="564.5" text-anchor="end" font-family="Liberation Sans, sans-serif" font-size="12.5" letter-spacing="-0.48" fill="#f2f2f2">$5,600,000.00</text>
<rect x="114.5" y="536.10" width="3" height="1.5" fill="#e8e8e8"/>
<text x="111.5" y="541.1" text-anchor="end" font-family="Liberation Sans, sans-serif" font-size="12.5" letter-spacing="-0.48" fill="#f2f2f2">$6,300,000.00</text>
<rect x="114.5" y="512.75" width="3" height="1.5" fill="#e8e8e8"/>
<text x="111.5" y="517.8" text-anchor="end" font-family="Liberation Sans, sans-serif" font-size="12.5" letter-spacing="-0.48" fill="#f2f2f2">$7,000,000.00</text>
<rect x="114.5" y="489.40" width="3" height="1.5" fill="#e8e8e8"/>
<text x="111.5" y="494.4" text-anchor="end" font-family="Liberation Sans, sans-serif" font-size="12.5" letter-spacing="-0.48" fill="#f2f2f2">$7,700,000.00</text>
<rect x="114.5" y="466.05" width="3" height="1.5" fill="#e8e8e8"/>
<text x="111.5" y="471.1" text-anchor="end" font-family="Liberation Sans, sans-serif" font-size="12.5" letter-spacing="-0.48" fill="#f2f2f2">$8,400,000.00</text>
<rect x="114.5" y="442.70" width="3" height="1.5" fill="#e8e8e8"/>
<text x="111.5" y="447.8" text-anchor="end" font-family="Liberation Sans, sans-serif" font-size="12.5" letter-spacing="-0.48" fill="#f2f2f2">$9,100,000.00</text>
<rect x="122.25" y="752" width="1.5" height="3" fill="#c8c8c8"/>
<text x="122.5" y="768.6" text-anchor="start" font-family="Liberation Sans, sans-serif" font-size="12" fill="#f2f2f2">2006</text>
<rect x="191.25" y="752" width="1.5" height="3" fill="#c8c8c8"/>
<text x="192" y="768.6" text-anchor="middle" font-family="Liberation Sans, sans-serif" font-size="12" fill="#f2f2f2">2007</text>
<rect x="260.25" y="752" width="1.5" height="3" fill="#c8c8c8"/>
<text x="261" y="768.6" text-anchor="middle" font-family="Liberation Sans, sans-serif" font-size="12" fill="#f2f2f2">2008</text>
<rect x="329.25" y="752" width="1.5" height="3" fill="#c8c8c8"/>
<text x="330" y="768.6" text-anchor="middle" font-family="Liberation Sans, sans-serif" font-size="12" fill="#f2f2f2">2009</text>
<rect x="398.25" y="752" width="1.5" height="3" fill="#c8c8c8"/>
<text x="399" y="768.6" text-anchor="middle" font-family="Liberation Sans, sans-serif" font-size="12" fill="#f2f2f2">2010</text>
<rect x="467.25" y="752" width="1.5" height="3" fill="#c8c8c8"/>
<text x="468" y="768.6" text-anchor="middle" font-family="Liberation Sans, sans-serif" font-size="12" fill="#f2f2f2">2011</text>
<rect x="536.25" y="752" width="1.5" height="3" fill="#c8c8c8"/>
<text x="537" y="768.6" text-anchor="middle" font-family="Liberation Sans, sans-serif" font-size="12" fill="#f2f2f2">2012</text>
<rect x="605.25" y="752" width="1.5" height="3" fill="#c8c8c8"/>
<text x="606" y="768.6" text-anchor="middle" font-family="Liberation Sans, sans-serif" font-size="12" fill="#f2f2f2">2013</text>
<rect x="674.25" y="752" width="1.5" height="3" fill="#c8c8c8"/>
<text x="675" y="768.6" text-anchor="middle" font-family="Liberation Sans, sans-serif" font-size="12" fill="#f2f2f2">2014</text>
<rect x="743.25" y="752" width="1.5" height="3" fill="#c8c8c8"/>
<text x="744" y="768.6" text-anchor="middle" font-family="Liberation Sans, sans-serif" font-size="12" fill="#f2f2f2">2015</text>
<rect x="812.25" y="752" width="1.5" height="3" fill="#c8c8c8"/>
<text x="813" y="768.6" text-anchor="middle" font-family="Liberation Sans, sans-serif" font-size="12" fill="#f2f2f2">2016</text>
<rect x="881.25" y="752" width="1.5" height="3" fill="#c8c8c8"/>
<text x="882" y="768.6" text-anchor="middle" font-family="Liberation Sans, sans-serif" font-size="12" fill="#f2f2f2">2017</text>
<rect x="950.25" y="752" width="1.5" height="3" fill="#c8c8c8"/>
<text x="951" y="768.6" text-anchor="middle" font-family="Liberation Sans, sans-serif" font-size="12" fill="#f2f2f2">2018</text>
<rect x="1019.25" y="752" width="1.5" height="3" fill="#c8c8c8"/>
<text x="1020" y="768.6" text-anchor="middle" font-family="Liberation Sans, sans-serif" font-size="12" fill="#f2f2f2">2019</text>
<rect x="1088.25" y="752" width="1.5" height="3" fill="#c8c8c8"/>
<text x="1089" y="768.6" text-anchor="middle" font-family="Liberation Sans, sans-serif" font-size="12" fill="#f2f2f2">2020</text>
<rect x="1157.25" y="752" width="1.5" height="3" fill="#c8c8c8"/>
<text x="1158" y="768.6" text-anchor="middle" font-family="Liberation Sans, sans-serif" font-size="12" fill="#f2f2f2">2021</text>
<rect x="1226.25" y="752" width="1.5" height="3" fill="#c8c8c8"/>
<text x="1227" y="768.6" text-anchor="middle" font-family="Liberation Sans, sans-serif" font-size="12" fill="#f2f2f2">2022</text>
<rect x="1295.25" y="752" width="1.5" height="3" fill="#c8c8c8"/>
<text x="1296" y="768.6" text-anchor="middle" font-family="Liberation Sans, sans-serif" font-size="12" fill="#f2f2f2">2023</text>
<rect x="1364.25" y="752" width="1.5" height="3" fill="#c8c8c8"/>
<text x="1365" y="768.6" text-anchor="middle" font-family="Liberation Sans, sans-serif" font-size="12" fill="#f2f2f2">2024</text>
<rect x="1433.25" y="752" width="1.5" height="3" fill="#c8c8c8"/>
<text x="1434.5" y="768.6" text-anchor="end" font-family="Liberation Sans, sans-serif" font-size="12" fill="#f2f2f2">2025</text>
<text x="776" y="782.8" text-anchor="middle" font-family="Liberation Sans, sans-serif" font-size="12" fill="#f2f2f2">Year</text>
<text transform="translate(29.5,587.0) rotate(-90)" text-anchor="middle" font-family="Liberation Sans, sans-serif" font-size="12" fill="#f2f2f2">Cumulative profit ($)</text>
</svg>
</body></html>
